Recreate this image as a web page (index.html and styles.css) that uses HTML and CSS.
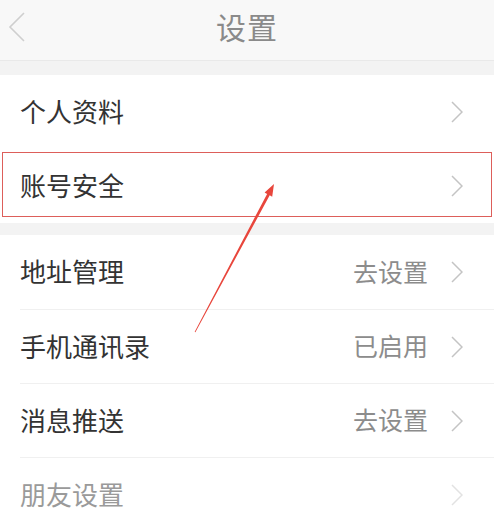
FILE: index.html
```html
<!DOCTYPE html>
<html lang="zh-CN">
<head>
<meta charset="utf-8">
<title>设置</title>
<link rel="stylesheet" href="styles.css">
</head>
<body>
<div class="page">
  <header class="nav">
    <div class="nav-left">
      <svg class="back" width="18" height="30" viewBox="0 0 18 30"><polyline points="16,1 2,15 16,29" fill="none" stroke="#cfcfcf" stroke-width="1.6"/></svg>
    </div>
    <h1 class="title">设置</h1>
    <div class="nav-right"></div>
  </header>
  <div class="gap gap-top"></div>
  <section class="group">
    <div class="row"><span class="label">个人资料</span><span class="value"></span><svg class="chev" width="12" height="22" viewBox="0 0 12 22"><polyline points="1,1 11,11 1,21" fill="none" stroke="#c4c4c4" stroke-width="1.5"/></svg></div>
    <div class="row row-plain"><span class="label">账号安全</span><span class="value"></span><svg class="chev" width="12" height="22" viewBox="0 0 12 22"><polyline points="1,1 11,11 1,21" fill="none" stroke="#c4c4c4" stroke-width="1.5"/></svg></div>
  </section>
  <div class="gap gap-mid"></div>
  <section class="group">
    <div class="row"><span class="label">地址管理</span><span class="value">去设置</span><svg class="chev" width="12" height="22" viewBox="0 0 12 22"><polyline points="1,1 11,11 1,21" fill="none" stroke="#c4c4c4" stroke-width="1.5"/></svg></div>
    <div class="row"><span class="label">手机通讯录</span><span class="value">已启用</span><svg class="chev" width="12" height="22" viewBox="0 0 12 22"><polyline points="1,1 11,11 1,21" fill="none" stroke="#c4c4c4" stroke-width="1.5"/></svg></div>
    <div class="row"><span class="label">消息推送</span><span class="value">去设置</span><svg class="chev" width="12" height="22" viewBox="0 0 12 22"><polyline points="1,1 11,11 1,21" fill="none" stroke="#c4c4c4" stroke-width="1.5"/></svg></div>
    <div class="row row-faded"><span class="label">朋友设置</span><span class="value"></span><svg class="chev" width="12" height="22" viewBox="0 0 12 22"><polyline points="1,1 11,11 1,21" fill="none" stroke="#e2e2e2" stroke-width="1.5"/></svg></div>
  </section>
  <div class="highlight"></div>
  <svg class="arrow" width="494" height="520" viewBox="0 0 494 520">
    <polygon points="194.6,332 267.1,193.9 264.6,192.4 274,184 272.2,196.7 269.7,195.3 195.4,332.2" fill="#e8463c"/>
  </svg>
</div>
</body>
</html>
```

FILE: styles.css
```css
* { box-sizing: border-box; }
html, body { margin: 0; padding: 0; background: #ffffff; }
body {
  font-family: "Noto Sans CJK SC", "Noto Sans", sans-serif;
  color: #333333;
  width: 494px;
  height: 520px;
  overflow: hidden;
}
.page { position: relative; width: 494px; height: 520px; overflow: hidden; }
.nav {
  height: 61px;
  background: #f8f8f8;
  border-bottom: 1px solid #e9e9e9;
  display: grid;
  grid-template-columns: 1fr auto 1fr;
  align-items: center;
  padding-bottom: 8px;
}
.nav-left { display: flex; align-items: center; padding-left: 8px; padding-top: 2px; }
.back { display: block; }
.title {
  margin: 0;
  font-size: 30px;
  font-weight: 400;
  color: #8a8a8a;
  line-height: 1;
  letter-spacing: 1px;
}
.gap { background: #f3f3f3; }
.gap-top { height: 14px; }
.gap-mid { height: 12px; }
.group { background: #ffffff; }
.row {
  height: 74px;
  margin-left: 20px;
  padding-right: 31px;
  display: flex;
  align-items: center;
}
.row + .row { border-top: 1px solid #f0f0f0; }
.row-plain { border-top: none !important; }
.label {
  flex: 1;
  font-size: 26px;
  color: #333333;
  line-height: 1;
  padding-bottom: 2px;
}
.value {
  font-size: 25px;
  color: #8c8c8c;
  line-height: 1;
  margin-right: 23px;
  padding-bottom: 2px;
}
.chev { display: block; }
.row-faded .label { color: #9a9a9a; }
.highlight {
  position: absolute;
  left: 2px;
  top: 152px;
  width: 490px;
  height: 65px;
  border: 1.5px solid #dd5e5a;
}
.arrow { position: absolute; left: 0; top: 0; pointer-events: none; }
```
